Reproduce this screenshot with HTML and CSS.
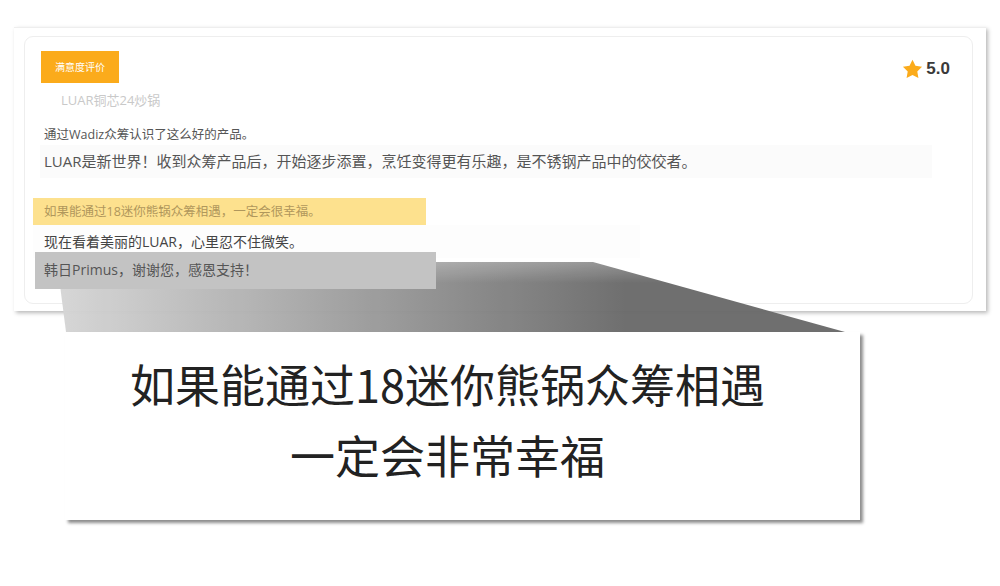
FILE: index.html
```html
<!DOCTYPE html>
<html lang="zh">
<head>
    <meta charset="UTF-8">
    <title>满意度评价</title>
    <link rel="stylesheet" href="styles.css">
</head>
<body>
<div class="shot">
    <div class="review-card">
        <div class="review-head">
            <span class="tag">满意度评价</span>
            <span class="rating">
                <svg width="21" height="20" viewBox="0 0 24 23"><path d="M12 0.8l3.4 7 7.6 1.1-5.5 5.4 1.3 7.6L12 18.3l-6.8 3.6 1.3-7.6L1 8.9l7.6-1.1z" fill="#fbab1b"/></svg>
                <b>5.0</b>
            </span>
        </div>
        <div class="product">LUAR铜芯24炒锅</div>
        <p class="line small">通过Wadiz众筹认识了这么好的产品。</p>
        <p class="line big">LUAR是新世界！收到众筹产品后，开始逐步添置，烹饪变得更有乐趣，是不锈钢产品中的佼佼者。</p>
        <p class="line marked">如果能通过18迷你熊锅众筹相遇，一定会很幸福。</p>
        <p class="line soft">现在看着美丽的LUAR，心里忍不住微笑。</p>
        <p class="line grey">韩日Primus，谢谢您，感恩支持！</p>
    </div>
</div>

<!-- zoom callout -->
<div class="beam"></div>

<div class="callout">
    <p>如果能通过18迷你熊锅众筹相遇</p>
    <p>一定会非常幸福</p>
</div>
</body>
</html>
```

FILE: styles.css
```css
/* General Reset */
body {
    margin: 0;
    padding: 0;
    background: #ffffff;
    font-family: "Open Sans", "Noto Sans CJK SC", sans-serif;
    position: relative;
    min-height: 586px;
}

p {
    margin: 0;
}

/* Screenshot frame */
.shot {
    margin: 27px 0 0 14px;
    width: 972px;
    height: 284px;
    box-sizing: border-box;
    padding: 9px 0 0 10px;
    background: #fff;
    border-top: 1px solid #eeeeee;
    box-shadow: 2px 2px 4px rgba(0, 0, 0, 0.28);
}

.review-card {
    width: 949px;
    height: 268px;
    box-sizing: border-box;
    margin-top: -1px;
    padding: 14px 22px 0 16px;
    border: 1px solid #eeeeee;
    border-radius: 9px;
}

.review-head {
    display: flex;
    justify-content: space-between;
    align-items: center;
    height: 32px;
}

.tag {
    width: 78px;
    height: 32px;
    line-height: 32px;
    text-align: center;
    background: #fbab1b;
    color: #fff;
    font-size: 10px;
}

.rating {
    display: flex;
    align-items: center;
    gap: 3px;
    margin-top: 3px;
}

.rating b {
    font-family: "Liberation Sans", sans-serif;
    font-size: 17px;
    color: #3a3a3a;
}

.product {
    margin-top: 8px;
    padding-left: 20px;
    line-height: 18px;
    font-size: 13px;
    color: #c9c9c9;
}

.line {
    color: #555;
    white-space: nowrap;
}

.small {
    margin-top: 17px;
    padding-left: 3px;
    line-height: 18px;
    font-size: 12.5px;
}

.big {
    margin-top: 1px;
    margin-left: -1px;
    width: 892px;
    height: 33px;
    padding-left: 4px;
    line-height: 33px;
    font-size: 15px;
    background: #fbfbfb;
    box-sizing: border-box;
}

.marked {
    margin-top: 20px;
    margin-left: -8px;
    width: 393px;
    height: 27px;
    padding-left: 11px;
    line-height: 28px;
    font-size: 12.5px;
    color: #b0975c;
    background: #fde18e;
    box-sizing: border-box;
}

.soft {
    margin-left: -8px;
    width: 607px;
    height: 33px;
    padding-left: 11px;
    line-height: 33px;
    font-size: 14px;
    color: #444;
    background: #fdfdfd;
    box-sizing: border-box;
}

.grey {
    position: relative;
    z-index: 2;
    margin-top: -6px;
    margin-left: -6px;
    width: 401px;
    height: 37px;
    padding-left: 9px;
    line-height: 35px;
    font-size: 14px;
    background: #c3c3c3;
    box-sizing: border-box;
}

/* Grey beam joining the line to the callout */
.beam {
    position: absolute;
    z-index: 1;
    left: 57px;
    top: 262px;
    width: 790px;
    height: 70px;
    background:
        linear-gradient(to bottom, rgba(255, 255, 255, 0.25), rgba(255, 255, 255, 0) 30%),
        linear-gradient(to right, #d6d6d6 0%, #9a9a9a 40%, #6a6a6a 72%);
    clip-path: polygon(0 0, 536px 0, 788px 70px, 9px 70px);
    opacity: 0.96;
}

.callout {
    position: relative;
    z-index: 2;
    margin: 21px 0 0 65px;
    width: 795px;
    height: 188px;
    box-sizing: border-box;
    padding: 16px 30px 0 0;
    background: #fff;
    box-shadow: 3px 3px 3px rgba(0, 0, 0, 0.45);
    text-align: center;
    font-family: "Noto Sans CJK SC", sans-serif;
    font-size: 45px;
    font-weight: 400;
    line-height: 71px;
    color: #222;
}
```
